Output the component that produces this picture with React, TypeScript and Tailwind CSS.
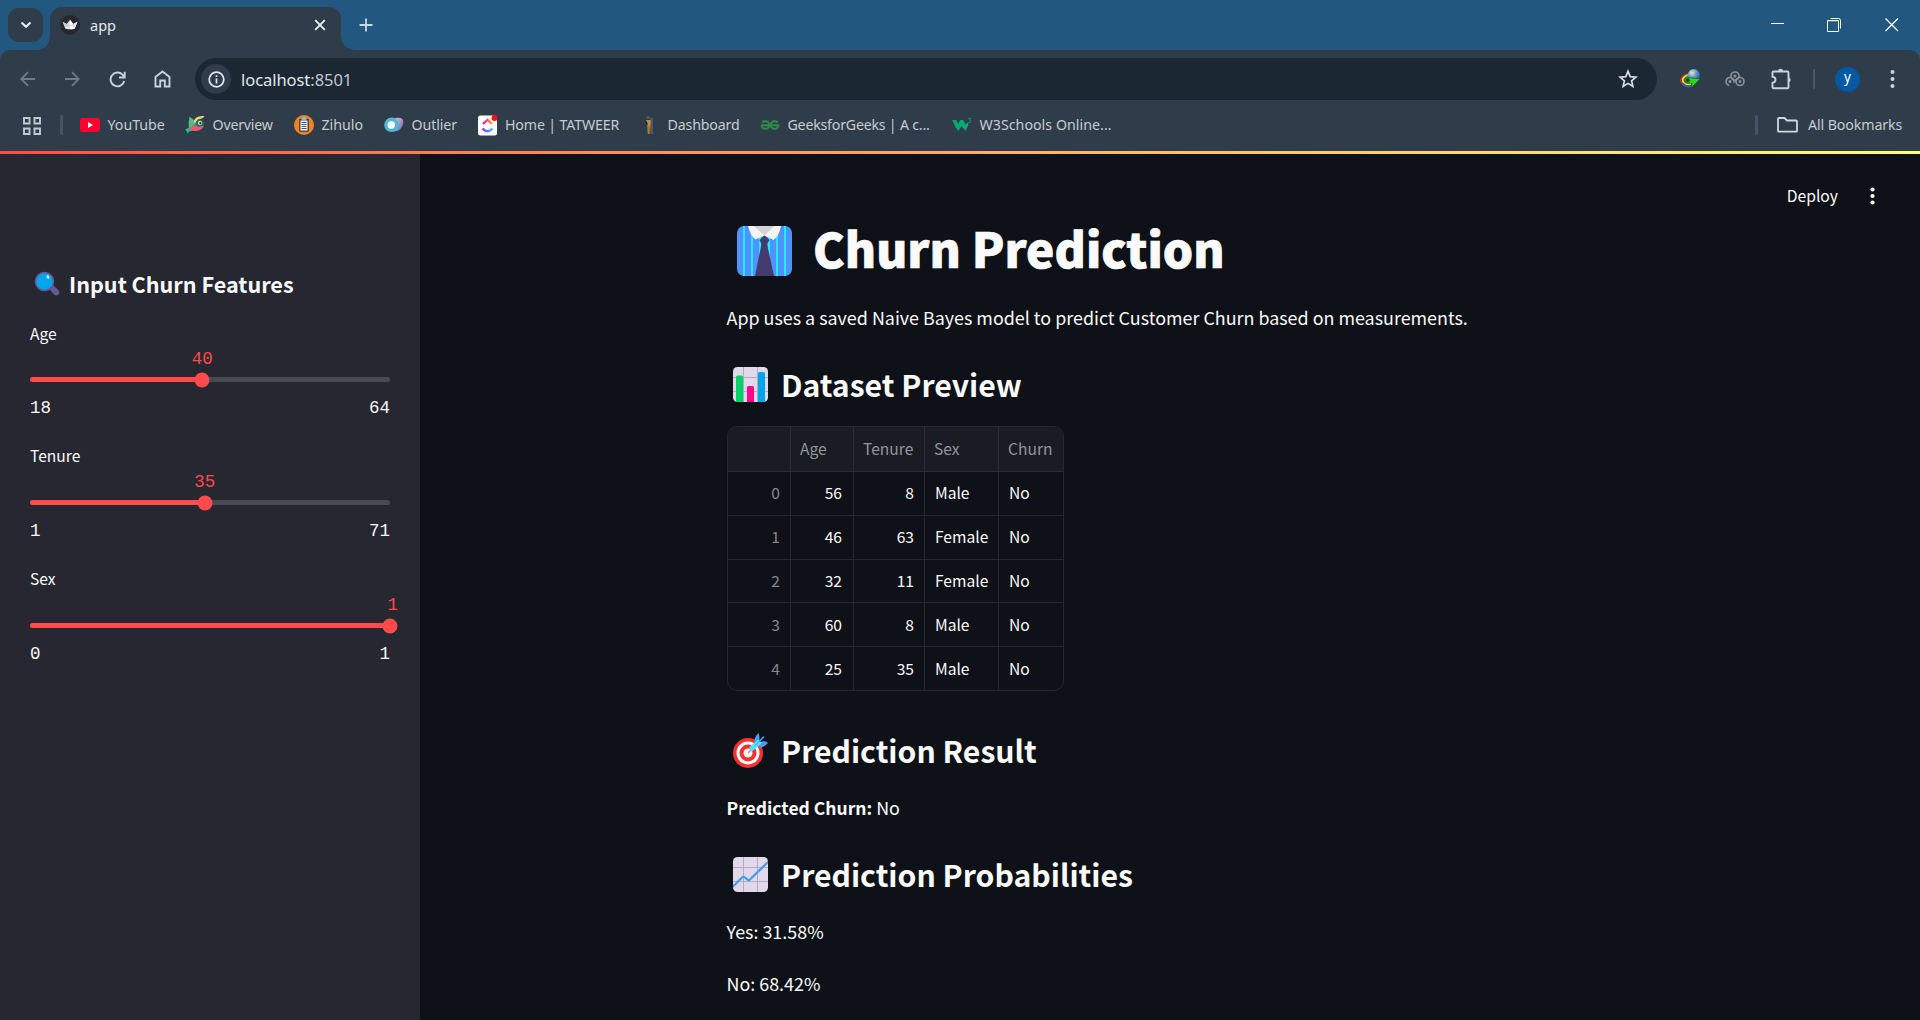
import React from "react";
import { SiGeeksforgeeks } from "react-icons/si";

const SANS = "font-['Noto_Sans_CJK_SC',sans-serif]";
const MONO = "font-['Liberation_Mono',monospace]";
const UI = "font-['Noto_Sans',sans-serif]";

/* ---------- favicons ---------- */

const CrownIcon = () => (
  <svg className="h-5 w-5 shrink-0" viewBox="0 0 20 20">
    <circle cx="10" cy="10" r="10" fill="#262730" />
    <path d="M2.6 6.8 6.8 9 10 4.8 13.2 9l4.2-2.2-2.6 6.6Q10 15.2 5.2 13.4z" fill="#e3e3e3" />
    <path d="M10 4.8 13.2 9l4.2-2.2-2.6 6.6Q12 14.6 10 14z" fill="#fff" />
    <path d="M2.6 6.8 10 10.5l7.4-3.7-2.6 5.4Q10 9.9 5.2 12.2z" fill="#b9b9b9" opacity=".5" />
  </svg>
);

const YoutubeIcon = () => (
  <svg className="h-5 w-5 shrink-0" viewBox="0 0 20 20">
    <rect x="0" y="3" width="20" height="14" rx="3" fill="#ff0033" />
    <path d="M8 7v6l5-3z" fill="#fff" />
  </svg>
);

const OverviewIcon = () => (
  <svg className="h-5 w-5 shrink-0" viewBox="0 0 20 20">
    <path d="M0 14.500 4.500 12.500l3 3L4 16.500 2.600 19 2 16.500z" fill="#2db39b" />
    <path d="M4.500 1.500 12.500 8 4 14Q3 8 4.500 1.500z" fill="#4dbd8c" />
    <path d="M3.500 13.500 12 9l7 2.500Q15 17 7 15.800z" fill="#f0566c" />
    <path d="M8.500 7Q10 0 19.500 1 18.500 3.500 15 4 12 4 11 8z" fill="#f6d365" />
    <path d="M10.500 9Q10.500 4.500 15 4.500 19 5.500 19 10l-4 2Q11 12 10.500 9z" fill="#23766f" />
    <circle cx="15" cy="8" r="2" fill="#f4e7b0" />
    <circle cx="15.400" cy="8.200" r="1.100" fill="#203c4c" />
  </svg>
);

const ZihuloIcon = () => (
  <svg className="h-5 w-5 shrink-0" viewBox="0 0 20 20">
    <circle cx="10" cy="10" r="10" fill="#f5821f" />
    <rect x="5.200" y="3.800" width="9.600" height="13" rx="1.200" fill="#2b3c4c" />
    <rect x="6.500" y="5.500" width="7" height="10" fill="#fff" />
    <rect x="7.600" y="2.200" width="4.800" height="3.400" rx="1" fill="#6ec4e8" />
    <path d="M7.500 7.500h5M7.500 9.500h5M7.500 11.500h5M7.500 13.500h5" stroke="#44525e" strokeWidth="1" />
  </svg>
);

const OutlierIcon = () => (
  <svg className="h-5 w-5 shrink-0" viewBox="0 0 20 20">
    <defs>
      <linearGradient id="outA" x1="0" y1="0" x2="1" y2="1">
        <stop offset="0" stopColor="#c7d3ee" />
        <stop offset=".5" stopColor="#b18fc4" />
        <stop offset="1" stopColor="#3f78c4" />
      </linearGradient>
    </defs>
    <path d="M9 4Q15 1.500 18.500 4 21 8 16 14.500 13 17 9 16z" fill="url(#outA)" />
    <circle cx="7.500" cy="9.800" r="7.300" fill="#4fb9d3" />
    <circle cx="7.300" cy="10" r="3.700" fill="#fff" />
  </svg>
);

const ClickupIcon = () => (
  <svg className="h-[22px] w-5 shrink-0" viewBox="0 0 20 22">
    <defs>
      <linearGradient id="cuA">
        <stop offset="0" stopColor="#ff02f0" />
        <stop offset="1" stopColor="#ffa800" />
      </linearGradient>
      <linearGradient id="cuB">
        <stop offset="0" stopColor="#8930fd" />
        <stop offset="1" stopColor="#3bc5ff" />
      </linearGradient>
    </defs>
    <rect x="0" y="1.500" width="19" height="20" rx="2.500" fill="#fff" />
    <path d="m5 10 4.500-4.200L14 10" fill="none" stroke="url(#cuA)" strokeWidth="2.300" />
    <path d="M4.500 14.500q5 5.500 10 0" fill="none" stroke="url(#cuB)" strokeWidth="2.500" />
    <circle cx="16.500" cy="4" r="3" fill="#fb0d0d" />
  </svg>
);

const DashboardIcon = () => (
  <svg className="h-5 w-5 shrink-0" viewBox="0 0 20 20">
    <circle cx="8" cy="2.500" r="1.800" fill="#4d5a5f" />
    <path d="M10 3h3v16h-2.500z" fill="#4c5b66" />
    <path d="M5.500 5h5.300l-.3 5-.5 9H7.800L7.300 10z" fill="#c08e33" />
    <path d="M5.500 4.500 7.500 8l.2 2-2-2z" fill="#151a20" />
    <path d="M9.200 11.500V19" stroke="#5b4a28" strokeWidth=".7" />
  </svg>
);

const W3Icon = () => (
  <svg className="h-5 w-5 shrink-0" viewBox="0 0 20 20">
    <path d="M.3 5h3.900l2 4L8.300 5h3l2.200 4.400L15.200 7.200 16.500 10l-3 6-3.900-4.700L6.200 16 3.500 12z" fill="#04aa6d" />
    <path d="M15.800 3.300h3l-1.500 1.700q1.800.2 1.500 1.700-.8 1.600-2.900.7" fill="none" stroke="#04aa6d" strokeWidth=".8" />
  </svg>
);

const bookmarks = [
  { label: "YouTube", icon: <YoutubeIcon />, box: "w-[105px]", track: "tracking-[0px]" },
  { label: "Overview", icon: <OverviewIcon />, box: "w-[109px]", track: "tracking-[-0.2px]" },
  { label: "Zihulo", icon: <ZihuloIcon />, box: "w-[90px]", track: "tracking-[0px]" },
  { label: "Outlier", icon: <OutlierIcon />, box: "w-[93.5px]", track: "tracking-[-0.1px]" },
  { label: "Home | TATWEER", icon: <ClickupIcon />, box: "w-[162.5px]", track: "tracking-[-0.15px]" },
  { label: "Dashboard", icon: <DashboardIcon />, box: "w-[120px]", track: "tracking-[-0.15px]" },
  {
    label: "GeeksforGeeks | A c...",
    icon: <SiGeeksforgeeks className="h-[18px] w-5 shrink-0 stroke-[#2f8d46] stroke-[0.700px] text-[#2f8d46]" />,
    box: "w-[192px]",
    track: "tracking-[-0.22px]",
  },
  { label: "W3Schools Online...", icon: <W3Icon />, box: "w-[164px]", track: "tracking-[0.04px]" },
];

/* ---------- browser chrome ---------- */

const TabStrip = () => (
  <div className="flex h-[50px] items-start bg-[#22587f]">
    <div className="ml-2 mt-2 flex h-[34px] w-[35px] items-center justify-center rounded-[11px] bg-[#2f3d4b]">
      <svg width="12" height="8" viewBox="0 0 12 8">
        <path d="m1.500 1.500 4.500 4.300 4.500-4.300" fill="none" stroke="#e6edf3" strokeWidth="2.200" />
      </svg>
    </div>
    <svg className="mt-[34px] -ml-[7px] shrink-0" width="14" height="16" viewBox="0 0 14 16">
      <path d="M14 0v16H0Q14 16 14 0z" fill="#2f3d4b" />
    </svg>
    <div className="mt-[7px] flex h-[43px] w-[291px] items-center rounded-t-[12px] bg-[#2f3d4b] pb-[8px] pl-[10px] pr-[14px]">
      <CrownIcon />
      <span className="ml-[10px] flex-1 text-[14.500px] leading-5 text-[#e6e9ec]">app</span>
      <svg width="14" height="14" viewBox="0 0 14 14">
        <path d="m2.200 2.200 9.600 9.600m0-9.600-9.600 9.600" stroke="#e6edf3" strokeWidth="1.900" />
      </svg>
    </div>
    <svg className="mt-[34px] shrink-0" width="16" height="16" viewBox="0 0 16 16">
      <path d="M0 0v16h16Q0 16 0 0z" fill="#2f3d4b" />
    </svg>
    <svg className="ml-[2px] mt-[18px]" width="14" height="14" viewBox="0 0 14 14">
      <path d="M7 .5v13M.5 7h13" stroke="#c9d7e6" strokeWidth="1.800" />
    </svg>
    <div className="ml-auto flex h-[50px] items-center pr-[21px]">
      <svg width="14" height="14" viewBox="0 0 14 14">
        <path d="M0 5.500h13" stroke="#fff" strokeWidth="1" />
      </svg>
      <svg className="ml-[42px]" width="15" height="15" viewBox="0 0 15 15">
        <path d="M3.500.5h8q2 0 2 2v8" fill="none" stroke="#fff" strokeWidth="1" />
        <rect x="1" y="2" width="10.500" height="1.500" fill="#8fa9bf" />
        <path d="M.5 2.500h11v11H.5z" fill="none" stroke="#fff" />
      </svg>
      <svg className="ml-[43px]" width="14" height="14" viewBox="0 0 14 14">
        <path d="m.5.5 12.500 12.500m0-12.500L.5 13" stroke="#fff" strokeWidth="1.200" />
      </svg>
    </div>
  </div>
);

const Toolbar = () => (
  <div className="flex h-[58px] shrink-0 items-center rounded-t-[10px] bg-[#2f3d4b] pl-5 text-[#c5d3e2]">
    <svg width="16" height="16" viewBox="0 0 16 16" fill="none" stroke="#6d7b89" strokeWidth="1.800">
      <path d="M15 8H1.500M8 1.200 1.300 8 8 14.800" />
    </svg>
    <svg className="ml-[28px]" width="16" height="16" viewBox="0 0 16 16" fill="none" stroke="#6d7b89" strokeWidth="1.800">
      <path d="M1 8h13.500M8 1.200 14.700 8 8 14.800" />
    </svg>
    <svg className="ml-[29px]" width="17" height="17" viewBox="0 0 17 17" fill="none" stroke="currentColor" strokeWidth="1.900">
      <path d="M15.200 10a6.900 6.900 0 1 1-1.700-6.300L15.500 6M15.700.8v5.700H10" />
    </svg>
    <svg className="ml-[28px]" width="17" height="18" viewBox="0 0 17 18" fill="none" stroke="currentColor" strokeWidth="1.900">
      <path d="M1.500 16.500V7l7-5.500 7 5.500v9.500h-4.700v-6H6.200v6z" />
    </svg>
    <div className="ml-[24px] flex h-[42px] w-[1462px] items-center rounded-full bg-[#1b2733] pl-[6px] pr-[19px]">
      <div className="flex h-[30px] w-[30px] items-center justify-center rounded-full bg-[#2f3d4b]">
        <svg width="17" height="17" viewBox="0 0 17 17" fill="none" stroke="#e3e8ee" strokeWidth="1.700">
          <circle cx="8.500" cy="8.500" r="7.300" />
          <path d="M8.500 7.500v5M8.500 4.300v1.800" />
        </svg>
      </div>
      <span className="ml-[10px] flex-1 pt-px text-[16.500px] leading-6 tracking-[-0.05px] text-[#e3e6ea]">
        localhost<span className="text-[#c3c8ce]">:8501</span>
      </span>
      <svg width="20" height="20" viewBox="0 0 20 20" fill="none" stroke="#d5dde6" strokeWidth="1.700">
        <path d="m10 2.300 2.200 5.300 5.700.5-4.300 3.700 1.300 5.600-4.900-3-4.900 3 1.300-5.600-4.300-3.700 5.700-.5z" />
      </svg>
    </div>
    <svg className="ml-[23px]" width="21" height="20" viewBox="0 0 21 20">
      <defs>
        <radialGradient id="idmBall" cx=".35" cy=".3" r=".8">
          <stop offset="0" stopColor="#e8f0a0" />
          <stop offset=".4" stopColor="#6fa0d8" />
          <stop offset="1" stopColor="#1a3f9c" />
        </radialGradient>
      </defs>
      <path d="M9 4.500Q0 7 1 12.500q3 5.500 9 4.500" fill="none" stroke="#e5372a" strokeWidth="1.200" />
      <path d="M9 6Q1.500 8 3 12.500q3 3.500 8 2.500" fill="none" stroke="#f6d523" strokeWidth="2" />
      <path d="M9 8Q3.500 9 5 12.500q2 2 5 1" fill="none" stroke="#1d8f2a" strokeWidth="2" />
      <path d="M2.500 14.500q3 4 9 3" fill="none" stroke="#1e63c8" strokeWidth="1.600" />
      <circle cx="13.800" cy="6.300" r="6.200" fill="url(#idmBall)" />
      <path d="m8 8.500 12 1.500-8.500 8.500.5-4-4.500-1 2.500-2z" fill="#2fd51e" stroke="#12700f" strokeWidth=".7" />
    </svg>
    <svg className="ml-[24px]" width="20" height="16" viewBox="0 0 20 16" fill="none" stroke="#8d949a" strokeWidth="1.600">
      <circle cx="10" cy="5" r="4" />
      <circle cx="5" cy="10.500" r="4" strokeDasharray="19 6" transform="rotate(100 5 10.500)" />
      <circle cx="15" cy="10.500" r="4" />
      <circle cx="10" cy="5" r=".7" />
      <circle cx="5" cy="10.500" r=".7" />
      <circle cx="15" cy="10.500" r=".7" />
    </svg>
    <svg className="ml-[26px]" width="21" height="22" viewBox="0 0 21 22" fill="none" stroke="currentColor" strokeWidth="1.900" strokeLinejoin="round">
      <path d="M2.500 3.500h14q1 0 1 1v14.700q0 1-1 1h-14q-1 0-1-1v-4.500q3-.2 3-2.900t-3-2.900V4.500q0-1 1-1z" />
      <path d="M7 3.200a2.500 2.500 0 0 1 5 0zM17.800 9.500a2.500 2.500 0 0 1 0 4.800z" fill="currentColor" stroke="none" />
    </svg>
    <div className="ml-[21px] h-5 w-[2px] rounded bg-[#4a5867]" />
    <div className="ml-5 flex h-[25px] w-[25px] items-center justify-center rounded-full bg-[#0259a4] pb-[3px] text-[13.500px] leading-none text-white">
      y
    </div>
    <svg className="ml-[30px]" width="5" height="18" viewBox="0 0 5 18" fill="currentColor">
      <circle cx="2.500" cy="2" r="2" />
      <circle cx="2.500" cy="9" r="2" />
      <circle cx="2.500" cy="16" r="2" />
    </svg>
  </div>
);

const BookmarksBar = () => (
  <div className="flex h-[43px] shrink-0 items-center bg-[#2f3d4b] pb-[9px] text-[14.200px] leading-5 text-[#c6cbd1]">
    <svg className="ml-[23px] mt-[1px]" width="18" height="18" viewBox="0 0 18 18" fill="none" stroke="#c2cad3" strokeWidth="1.900">
      <path d="M1 1h5.500v5.500H1zM11.500 1H17v5.500h-5.500zM1 11.500h5.500V17H1zM11.500 11.500H17V17h-5.500z" />
    </svg>
    <div className="ml-[19px] mr-[17px] h-5 w-[3px] rounded bg-[#465564]" />
    {bookmarks.map((b) => (
      <div key={b.label} className={`flex shrink-0 items-center gap-[7.500px] ${b.box}`}>
        {b.icon}
        <span className={`whitespace-nowrap ${b.track}`}>{b.label}</span>
      </div>
    ))}
    <div className="ml-auto mr-[19px] h-5 w-[3px] rounded bg-[#465564]" />
    <svg className="mr-[10px]" width="21" height="16" viewBox="0 0 21 16" fill="none" stroke="#d3d8de" strokeWidth="1.800" strokeLinejoin="round">
      <path d="M1 13.500V2q0-1 1-1h5.500L10 3.500h9q1 0 1 1v9.200q0 1-1 1H2q-1 0-1-1z" />
    </svg>
    <span className="mr-[18px] w-[94px] whitespace-nowrap tracking-[-0.1px]">All Bookmarks</span>
  </div>
);

/* ---------- emoji drawings ---------- */

const MagnifierEmoji = () => (
  <svg className="ml-[4px] mr-[9px] h-[26px] w-[26px] shrink-0" viewBox="0 0 26 26">
    <path d="m17.500 16.500 4.800 4.800" stroke="#635994" strokeWidth="6" strokeLinecap="round" />
    <circle cx="10.500" cy="10.500" r="9" fill="#00a6ed" stroke="#635994" strokeWidth="1.500" />
    <ellipse cx="14" cy="6" rx="1.200" ry="1.800" transform="rotate(-35 14 6)" fill="#fff" />
  </svg>
);

const NecktieEmoji = () => (
  <svg className="ml-[11px] h-[50px] w-[55px] shrink-0" viewBox="0 0 55 50">
    <defs>
      <clipPath id="shirt">
        <rect width="55" height="50" rx="7" />
      </clipPath>
    </defs>
    <g clipPath="url(#shirt)">
      <rect width="55" height="50" fill="#5092ff" />
      <path d="M7 0v50M15 0v50M23 0v50M32 0v50M40 0v50M48 0v50" stroke="#26eafc" strokeWidth="2" />
      <path d="M17 0h20L27.500 11z" fill="#d3d3d3" />
      <path d="M11 0h6l10.500 9.500-9 4Q13 9 11 0zM44 0h-7L27.500 9.500l9 4.500Q42 10 44 0z" fill="#f4f4f4" />
      <path d="m27.500 9.500 5 4.500-2.500 4 7 32H18l6.500-32-2-4z" fill="#433b6b" />
    </g>
  </svg>
);

const ChartTile = ({ children, id }: { children: React.ReactNode; id: string }) => (
  <svg className="ml-[7px] h-[35px] w-[35px] shrink-0" viewBox="0 0 35 35">
    <defs>
      <clipPath id={id}>
        <rect width="35" height="35" rx="4.500" />
      </clipPath>
    </defs>
    <g clipPath={`url(#${id})`}>
      <rect width="35" height="35" fill="#e1d8ec" />
      <path d="M10.500 0v35M24.500 0v35M0 10.500h35M0 24.500h35" stroke="#b4acbc" strokeWidth="1" />
      {children}
    </g>
  </svg>
);

const BarsEmoji = () => (
  <ChartTile id="bars">
    <path d="M3 35V10q0-1.500 1.500-1.500h4Q10 8.500 10 10v25z" fill="#00d26a" />
    <path d="M14 35V20.500q0-1.500 1.500-1.500h4q1.500 0 1.500 1.500V35z" fill="#f8088b" />
    <path d="M25 35V6.500Q25 5 26.500 5h4Q32 5 32 6.500V35z" fill="#00a6ed" />
  </ChartTile>
);

const TrendEmoji = () => (
  <ChartTile id="trend">
    <path d="m-1 30.500 10-10q1.500-1.200 3 0l2.500 2.200q1.200 1 2.500-.2L36 4" fill="none" stroke="#3f9fe8" strokeWidth="2.200" />
  </ChartTile>
);

const TargetEmoji = () => (
  <svg className="ml-[7px] h-[35px] w-[35px] shrink-0" viewBox="0 0 35 35">
    <circle cx="15" cy="20" r="15" fill="#f8312f" />
    <circle cx="15" cy="20" r="11.500" fill="#fff" />
    <circle cx="15" cy="20" r="8.500" fill="#f8312f" />
    <circle cx="15" cy="20" r="4.500" fill="#f4f4f4" />
    <path d="m15 20 5-5" stroke="#9b9b9b" strokeWidth="1.500" />
    <path d="M21.500 10Q20.500 5 25.500 0q1 2 1 7zM27 14.500l-1.500-4.500 5-2q3.500.5 4.500 2Q31 14.500 27 14.500z" fill="#4a9df8" />
    <path d="M24 10.500 30.500 4" stroke="#4a9df8" strokeWidth="1.600" strokeLinecap="round" />
    <path d="M16.500 14 25 6.500l4 3.500-9.500 8q-3 1-3-4z" fill="#50e2ff" />
    <path d="m22 12.500 6-5.500" stroke="#2fa8e8" strokeWidth="1" />
  </svg>
);

/* ---------- sidebar ---------- */

const sliders = [
  { label: "Age", min: 18, max: 64, value: 40, leading: "leading-[24px]" },
  { label: "Tenure", min: 1, max: 71, value: 35, leading: "leading-[22px]" },
  { label: "Sex", min: 0, max: 1, value: 1, leading: "leading-[22px]" },
];

const Slider = ({ label, min, max, value, leading }: (typeof sliders)[number]) => {
  const pct = `${((value - min) / (max - min)) * 100}%`;
  return (
    <div className="flex h-[123px] flex-col">
      <div className={`h-6 text-[15.600px] text-[#fafafa] ${leading}`}>{label}</div>
      <div className={`relative mt-[32px] h-[5px] rounded-full bg-[#474955] ${MONO}`}>
        <div className="h-full rounded-full bg-[#ff4b4b]" style={{ width: pct }} />
        <div
          className="absolute top-1/2 h-[15px] w-[15px] -translate-x-1/2 -translate-y-1/2 rounded-full bg-[#ff4b4b]"
          style={{ left: pct }}
        />
        <div
          className={`absolute -top-[30px] text-[17.500px] leading-6 text-[#ff4b4b] ${
            value === max ? "-right-[8px]" : "-translate-x-1/2"
          }`}
          style={value === max ? undefined : { left: pct }}
        >
          {value}
        </div>
      </div>
      <div className={`mt-[14px] flex justify-between text-[17.500px] leading-6 text-[#fafafa] ${MONO}`}>
        <span>{min}</span>
        <span>{max}</span>
      </div>
    </div>
  );
};

const Sidebar = () => (
  <aside className={`flex w-[420px] shrink-0 flex-col bg-[#262730] px-[30px] ${SANS}`}>
    <div className="mt-[115px] flex h-[30px] items-center">
      <MagnifierEmoji />
      <h3 className="whitespace-nowrap text-[21.600px] font-bold leading-[30px] text-[#fafafa]">
        Input Churn Features
      </h3>
    </div>
    <div className="mt-[22px] flex flex-col">
      {sliders.map((s) => (
        <Slider key={s.label} {...s} />
      ))}
    </div>
  </aside>
);

/* ---------- dataset table ---------- */

const rows = [
  [0, 56, 8, "Male", "No"],
  [1, 46, 63, "Female", "No"],
  [2, 32, 11, "Female", "No"],
  [3, 60, 8, "Male", "No"],
  [4, 25, 35, "Male", "No"],
];
const columns = ["", "Age", "Tenure", "Sex", "Churn"];
const cellAlign = [
  "justify-end pr-[10px] text-[#85878c]",
  "justify-end pr-[11px]",
  "justify-end pr-[10px]",
  "pl-[10px]",
  "pl-[10px]",
];

const DataTable = () => (
  <div className="ml-px h-[265px] w-[337px] overflow-hidden rounded-[10px] border border-[#26282d] text-[15.600px]">
    <div className="grid h-[45px] grid-cols-[63px_63px_71px_74px_64px] bg-[#1a1c23] text-[#93959a]">
      {columns.map((c, i) => (
        <div
          key={i}
          className={`flex items-center whitespace-nowrap border-b border-[#2b2d33] pl-[9px] ${
            i < 4 ? "border-r" : ""
          }`}
        >
          {c}
        </div>
      ))}
    </div>
    {rows.map((r, ri) => (
      <div
        key={ri}
        className="grid h-[43.800px] grid-cols-[63px_63px_71px_74px_64px] border-b border-[#26282d] text-[#fafafa] last:border-b-0"
      >
        {r.map((c, i) => (
          <div
            key={i}
            className={`flex items-center border-[#26282d] pb-px ${i < 4 ? "border-r" : ""} ${cellAlign[i]}`}
          >
            {c}
          </div>
        ))}
      </div>
    ))}
  </div>
);

/* ---------- main area ---------- */

const Heading = ({ icon, children }: { icon: React.ReactNode; children: React.ReactNode }) => (
  <div className="flex h-[43px] items-center gap-[13px]">
    {icon}
    <h3 className="mb-px whitespace-nowrap text-[30.200px] font-bold leading-[42px]">{children}</h3>
  </div>
);

const Main = () => (
  <main className={`flex flex-1 bg-[#0e1117] text-[17.900px] text-[#fafafa] ${SANS}`}>
    <div className="ml-[306px] flex w-[888px] shrink-0 flex-col">
      <div className="mt-[64px] flex h-[66px] items-center gap-[21px]">
        <NecktieEmoji />
        <h1 className="mb-[6px] whitespace-nowrap text-[47.700px] font-black leading-[66px] [-webkit-text-stroke:0.7px_#fafafa]">
          Churn Prediction
        </h1>
      </div>
      <p className="mt-[19px] h-[30px] pl-[0.500px] leading-[28px]">
        App uses a saved Naive Bayes model to predict Customer Churn based on measurements.
      </p>
      <div className="mt-[30px]">
        <Heading icon={<BarsEmoji />}>Dataset Preview</Heading>
      </div>
      <div className="mt-[20px]">
        <DataTable />
      </div>
      <div className="mt-[38px]">
        <Heading icon={<TargetEmoji />}>Prediction Result</Heading>
      </div>
      <p className="mt-[21px] h-[30px] pl-[0.500px] leading-[28px]">
        <strong className="text-[17.500px] font-bold">Predicted Churn:</strong> No
      </p>
      <div className="mt-[30px]">
        <Heading icon={<TrendEmoji />}>Prediction Probabilities</Heading>
      </div>
      <p className="mt-[21px] h-[30px] pl-[0.500px] leading-[28px]">Yes: 31.58%</p>
      <p className="mt-[22px] h-[30px] pl-[0.500px] leading-[28px]">No: 68.42%</p>
    </div>
    <div className="ml-auto mr-[45px] mt-[30px] flex h-6 items-center gap-[32px]">
      <span className="whitespace-nowrap text-[15.700px] leading-6">Deploy</span>
      <svg width="5" height="18" viewBox="0 0 5 18" fill="#fafafa">
        <circle cx="2.500" cy="2.500" r="2.100" />
        <circle cx="2.500" cy="9" r="2.100" />
        <circle cx="2.500" cy="15.500" r="2.100" />
      </svg>
    </div>
  </main>
);

export default function App() {
  return (
    <div className="flex h-[1020px] w-[1920px] flex-col overflow-hidden bg-[#0e1117]">
      <header className={`flex flex-col bg-[#22587f] ${UI}`}>
        <TabStrip />
        <Toolbar />
        <BookmarksBar />
      </header>
      <div className="h-[3px] shrink-0 bg-linear-to-r from-[#ff4b4b] to-[#fffd80]" />
      <div className="flex min-h-0 flex-1">
        <Sidebar />
        <Main />
      </div>
    </div>
  );
}
